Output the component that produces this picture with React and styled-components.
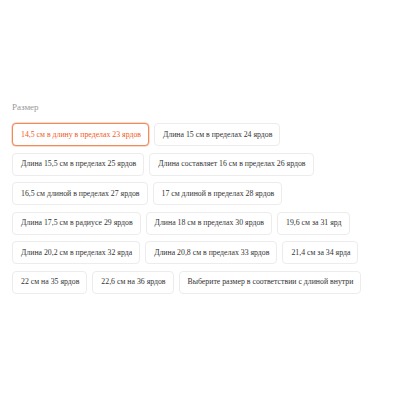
import React from "react";
import styled, { createGlobalStyle } from "styled-components";

const GlobalStyle = createGlobalStyle`
  html, body {
    margin: 0;
    padding: 0;
    background: #fff;
  }
`;

const serif = `"Liberation Serif", "Times New Roman", "DejaVu Serif", serif`;

const Page = styled.div`
  width: 400px;
  height: 400px;
  box-sizing: border-box;
  padding: 102px 12px 0 12px;
  font-family: ${serif};
`;

const Label = styled.div`
  font-family: ${serif};
  font-size: 9px;
  color: #999;
  margin-bottom: 11px;
`;

const Options = styled.div`
  display: flex;
  flex-wrap: wrap;
  gap: 6.5px 5px;
  width: 370px;
`;

const Chip = styled.button`
  box-sizing: border-box;
  height: 23px;
  padding: 0 7px 0 8px;
  font-family: ${serif};
  font-size: 7.8px;
  line-height: 1;
  background: #fff;
  border-radius: 4px;
  cursor: pointer;
  border: 1px solid ${(p) => (p.$active ? "#f2895b" : "#ececec")};
  color: ${(p) => (p.$active ? "#f2581b" : "#333")};
  box-shadow: ${(p) => (p.$active ? "0 0 0 0.5px #f6b89c" : "none")};
`;

const sizes = [
  "14,5 см в длину в пределах 23 ярдов",
  "Длина 15 см в пределах 24 ярдов",
  "Длина 15,5 см в пределах 25 ярдов",
  "Длина составляет 16 см в пределах 26 ярдов",
  "16,5 см длиной в пределах 27 ярдов",
  "17 см длиной в пределах 28 ярдов",
  "Длина 17,5 см в радиусе 29 ярдов",
  "Длина 18 см в пределах 30 ярдов",
  "19,6 см за 31 ярд",
  "Длина 20,2 см в пределах 32 ярда",
  "Длина 20,8 см в пределах 33 ярдов",
  "21,4 см за 34 ярда",
  "22 см на 35 ярдов",
  "22,6 см на 36 ярдов",
  "Выберите размер в соответствии с длиной внутри",
];

export default function App() {
  return (
    <>
      <GlobalStyle />
      <Page>
        <Label>Размер</Label>
        <Options>
          {sizes.map((s, i) => (
            <Chip key={s} $active={i === 0}>
              {s}
            </Chip>
          ))}
        </Options>
      </Page>
    </>
  );
}
